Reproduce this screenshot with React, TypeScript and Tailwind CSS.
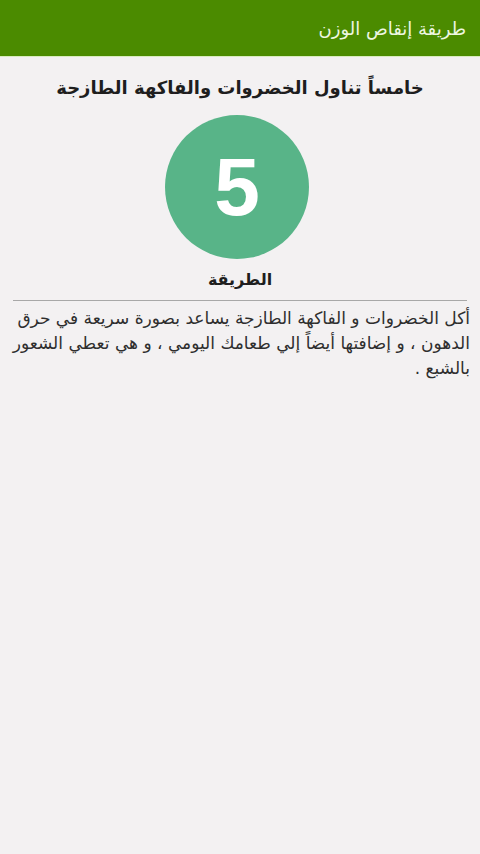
import React from "react";

export default function App() {
  return (
    <div
      dir="rtl"
      className="w-[480px] min-h-[854px] bg-[#f3f1f2] flex flex-col"
      style={{ fontFamily: '"DejaVu Sans", "Noto Sans", sans-serif' }}
    >
      <div className="h-[57px] bg-[#4b8b00] border-b border-[#d9ecbf] flex items-center px-[14px]">
        <span className="text-[18px] text-[#eef7e2]">طريقة إنقاص الوزن</span>
      </div>
      <div className="flex flex-col items-center">
        <h1 className="mt-[16px] text-[18px] font-bold text-[#1e1e1e] leading-[30px]">
          خامساً تناول الخضروات والفاكهة الطازجة
        </h1>
        <div className="mt-[12px] mr-[6px] w-[144px] h-[144px] rounded-full bg-[#58b488] flex items-center justify-center">
          <span
            className="text-[82px] font-bold text-white leading-none"
            style={{ fontFamily: '"Liberation Sans", Arial, sans-serif' }}
          >
            5
          </span>
        </div>
        <h2 className="mt-[8px] text-[16px] font-bold text-[#1e1e1e] leading-[26px]">الطريقة</h2>
      </div>
      <div className="mx-[13px] mt-[7px] h-px bg-[#a8a8a8]" />
      <p className="mt-[5px] px-[10px] text-[17px] leading-[25px] text-[#2e2e2e] text-right">
        أكل الخضروات و الفاكهة الطازجة يساعد بصورة سريعة في حرق الدهون ، و إضافتها أيضاً إلي طعامك اليومي ، و هي تعطي الشعور بالشبع .
      </p>
    </div>
  );
}
